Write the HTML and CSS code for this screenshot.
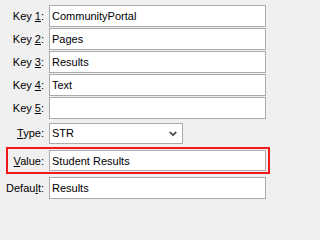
FILE: index.html
```html
<!DOCTYPE html>
<html>
<head>
<meta charset="utf-8">
<link rel="stylesheet" href="styles.css">
</head>
<body>
<div class="form">
  <div class="row"><label class="lbl">Key <u>1</u>:</label><div class="box">CommunityPortal</div></div>
  <div class="row"><label class="lbl">Key <u>2</u>:</label><div class="box">Pages</div></div>
  <div class="row"><label class="lbl">Key <u>3</u>:</label><div class="box">Results</div></div>
  <div class="row"><label class="lbl">Key <u>4</u>:</label><div class="box">Text</div></div>
  <div class="row"><label class="lbl">Key <u>5</u>:</label><div class="box"></div></div>
  <div class="row row-type"><label class="lbl"><u>T</u>ype:</label>
    <div class="box select"><span>STR</span>
      <svg class="chev" width="8" height="6" viewBox="0 0 8 6"><polyline points="0.8,1 4,4.2 7.2,1" fill="none" stroke="#555" stroke-width="1.8"/></svg>
    </div>
  </div>
  <div class="row highlight"><label class="lbl lbl-in"><u>V</u>alue:</label><div class="box box-in">Student Results</div></div>
  <div class="row row-default"><label class="lbl">Defau<u>l</u>t:</label><div class="box">Results</div></div>
</div>
</body>
</html>
```
FILE: styles.css
```css
html, body {
  margin: 0;
  padding: 0;
  background: #f0f0f0;
  width: 271px;
  height: 202px;
  overflow: hidden;
}
body {
  font-family: "Liberation Sans", Arial, sans-serif;
  font-size: 11px;
  color: #000;
}
.form {
  display: flex;
  flex-direction: column;
  gap: 1px;
  padding-top: 5px;
}
.row {
  display: flex;
  align-items: center;
  height: 22px;
}
.lbl {
  width: 44px;
  margin-right: 5px;
  text-align: right;
  white-space: nowrap;
}
.lbl u {
  text-decoration-thickness: 1px;
  text-underline-offset: 1px;
}
.box {
  box-sizing: border-box;
  width: 217px;
  height: 22px;
  border: 1px solid #ababab;
  background: #fff;
  padding-left: 2px;
  display: flex;
  align-items: center;
  white-space: nowrap;
  color: #000;
}
.row-type {
  margin-top: 2px;
}
.select {
  width: 134px;
  height: 21px;
  justify-content: space-between;
  padding-right: 5px;
}
.chev {
  display: block;
  margin-top: 1px;
}
.highlight {
  box-sizing: border-box;
  margin-top: 2px;
  margin-left: 6px;
  width: 264px;
  height: 27px;
  border: 2px solid #f01818;
  padding: 0 2px 0 0;
}
.lbl-in {
  width: 36px;
}
.box-in {
  height: 21px;
}
.row-default {
  margin-top: 2px;
}
```
